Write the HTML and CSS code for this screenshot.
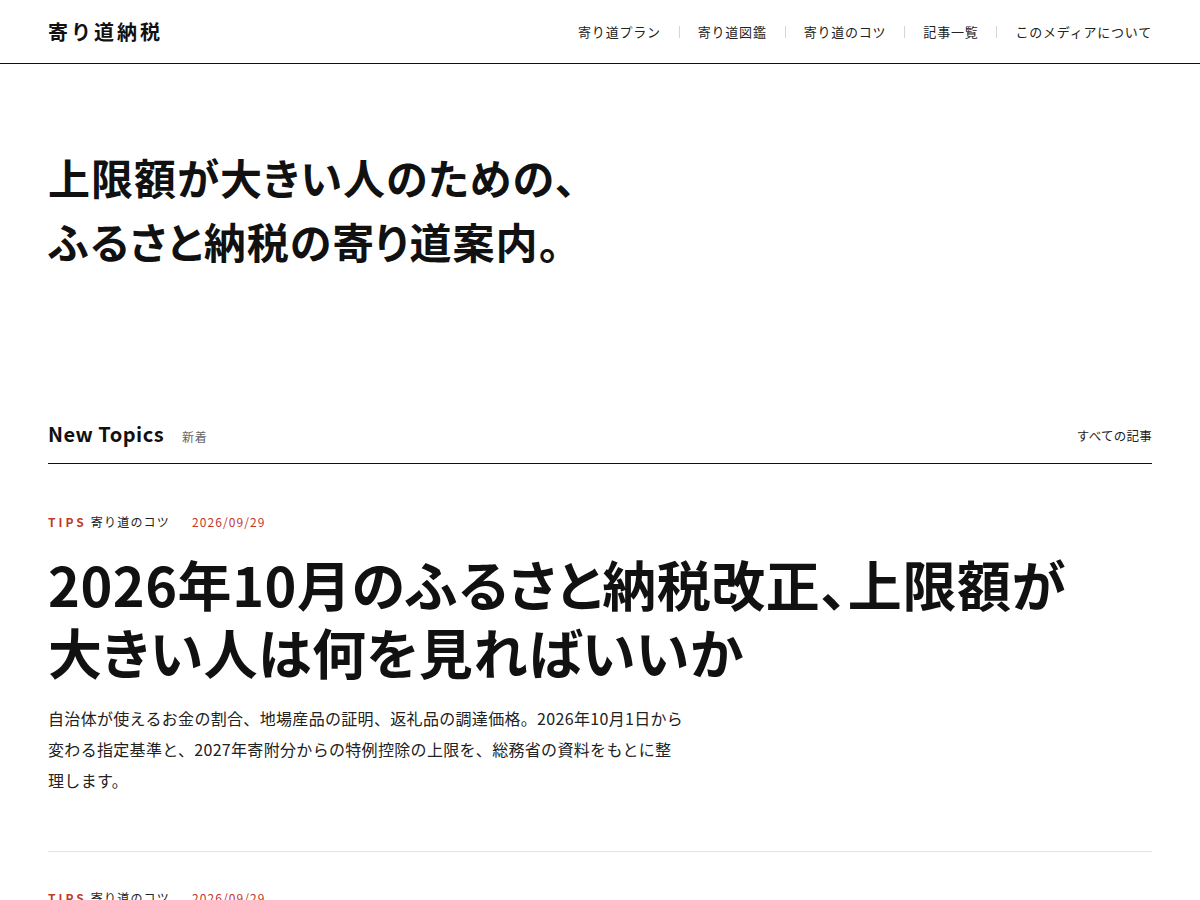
FILE: index.html
```html
<!DOCTYPE html>
<html lang="ja">
<head>
<meta charset="utf-8">
<title>寄り道納税</title>
<link rel="stylesheet" href="styles.css">
</head>
<body>
<header class="site-header">
  <a class="logo" href="#">寄り道納税</a>
  <nav class="nav">
    <a href="#">寄り道プラン</a>
    <span class="sep"></span>
    <a href="#">寄り道図鑑</a>
    <span class="sep"></span>
    <a href="#">寄り道のコツ</a>
    <span class="sep"></span>
    <a href="#">記事一覧</a>
    <span class="sep"></span>
    <a href="#">このメディアについて</a>
  </nav>
</header>
<main>
  <section class="hero">
    <h1>上限額が大きい人のための、<br>ふるさと納税の寄り道案内。</h1>
  </section>
  <section class="topics">
    <div class="section-head">
      <div class="section-title">
        <h2>New Topics</h2>
        <span class="sub">新着</span>
      </div>
      <a class="all" href="#">すべての記事</a>
    </div>
    <article class="post first">
      <div class="meta">
        <span class="tag">TIPS</span>
        <span class="cat">寄り道のコツ</span>
        <span class="date">2026/09/29</span>
      </div>
      <h3 class="post-title">2026年10月のふるさと納税改正、上限額が<br>大きい人は何を見ればいいか</h3>
      <p class="excerpt">自治体が使えるお金の割合、地場産品の証明、返礼品の調達価格。2026年10月1日から変わる指定基準と、2027年寄附分からの特例控除の上限を、総務省の資料をもとに整理します。</p>
    </article>
    <article class="post">
      <div class="meta">
        <span class="tag">TIPS</span>
        <span class="cat">寄り道のコツ</span>
        <span class="date">2026/09/29</span>
      </div>
      <h3 class="post-title">ふるさと納税の寄り道</h3>
    </article>
  </section>
</main>
</body>
</html>
```

FILE: styles.css
```css
* { box-sizing: border-box; }
html, body {
  margin: 0;
  padding: 0;
  background: #fff;
  color: #1a1a1a;
  font-family: "Noto Sans CJK JP", "Noto Sans", sans-serif;
}
a { color: inherit; text-decoration: none; }

.site-header {
  height: 64px;
  border-bottom: 1px solid #111;
  display: flex;
  align-items: center;
  justify-content: space-between;
  padding: 0 48px;
}
.logo {
  font-size: 20px;
  font-weight: 700;
  letter-spacing: 3px;
  color: #111;
}
.nav {
  display: flex;
  align-items: center;
  font-size: 13px;
  letter-spacing: 0.06em;
  color: #222;
}
.nav .sep {
  width: 1px;
  height: 12px;
  background: #d6d6d6;
  margin: 0 18px;
}

.hero {
  padding: 81px 48px 0;
}
.hero h1 {
  margin: 0;
  font-size: 42px;
  line-height: 64px;
  font-weight: 700;
  letter-spacing: 0.025em;
  font-feature-settings: "palt";
  color: #111;
}

.topics {
  margin-top: 146px;
  padding: 0 48px;
}
.section-head {
  display: flex;
  align-items: center;
  justify-content: space-between;
  height: 45px;
  padding-bottom: 15px;
  border-bottom: 1px solid #111;
}
.section-title {
  display: flex;
  align-items: baseline;
  gap: 18px;
}
.section-title h2 {
  margin: 0;
  font-size: 20px;
  line-height: 30px;
  font-weight: 700;
  letter-spacing: 0.025em;
  color: #111;
}
.sub {
  font-size: 12px;
  color: #666;
  letter-spacing: 0.05em;
}
.all {
  font-size: 12.5px;
  color: #222;
  letter-spacing: 0.02em;
  padding-top: 4px;
}

.post {
  padding: 35px 0 55px;
  border-bottom: 1px solid #e2e2e2;
}
.post.first { padding-top: 47px; }
.meta {
  display: flex;
  align-items: center;
  height: 20px;
  font-size: 12px;
}
.tag {
  color: #c0392b;
  font-weight: 700;
  letter-spacing: 0.25em;
  margin-right: 4px;
}
.cat {
  color: #222;
  letter-spacing: 0.1em;
}
.date {
  color: #c0392b;
  letter-spacing: 0.09em;
  margin-left: 22px;
}
.post-title {
  margin: 19px 0 0;
  font-size: 54px;
  line-height: 68px;
  font-weight: 700;
  letter-spacing: 0.01em;
  font-feature-settings: "palt";
  color: #111;
}
.excerpt {
  margin: 17px 0 0;
  max-width: 637px;
  font-size: 16px;
  line-height: 31px;
  letter-spacing: 0.02em;
  color: #222;
}
```
